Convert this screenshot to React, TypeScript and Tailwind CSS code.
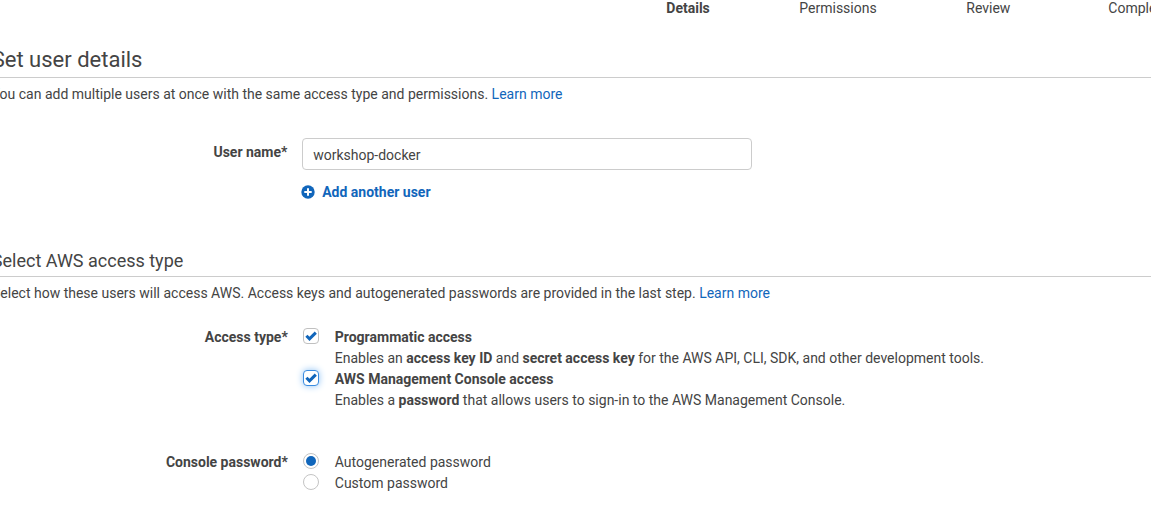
import React from "react";

function Link({ children }: { children: React.ReactNode }) {
  return <a href="#" className="text-[#1166bb]">{children}</a>;
}

function Check({ focused = false }: { focused?: boolean }) {
  return (
    <span className={focused ? "block size-4 rounded-[4px] border border-[#3b8ce0] bg-white shadow-[0_0_7px_#8fc3f5]" : "block size-4 rounded-[4px] border border-[#c0c0c0] bg-white"}>
      <svg viewBox="0 0 14 14" className="size-3.5"><path d="M2.4 6.8 5.5 9.9 11.8 3.6" fill="none" stroke="#1166bb" strokeWidth="3" /></svg>
    </span>
  );
}

function Radio({ on = false }: { on?: boolean }) {
  return (
    <span className="flex size-4 items-center justify-center rounded-full border border-[#c4c4c4] bg-white">
      {on && <span className="size-2.5 rounded-full bg-[#1166bb]" />}
    </span>
  );
}

const steps = ["Permissions", "Review", "Complete"];

export default function App() {
  return (
    <div className="h-[515px] w-[1151px] overflow-hidden bg-white font-['Roboto',sans-serif] text-[14px] leading-[21px] text-[#444]">
      <nav className="-mt-[2px] flex h-[21px] pl-[666.3px] whitespace-nowrap">
        <span className="w-[133px] shrink-0 font-bold">Details</span>
        <span className="w-[167px] shrink-0">{steps[0]}</span>
        <span className="w-[142px] shrink-0">{steps[1]}</span>
        <span className="shrink-0">{steps[2]}</span>
      </nav>
      <h1 className="-ml-[8.3px] mt-[23px] h-[36px] border-b border-[#ccc] text-[22px] leading-[36px]">Set user details</h1>
      <p className="-ml-[8.4px] mt-[6px]">You can add multiple users at once with the same access type and permissions. <Link>Learn more</Link></p>
      <div className="mt-[33px] flex">
        <label className="w-[287.4px] pt-[4px] text-right font-bold">User name*</label>
        <input className="ml-[14.6px] h-[32px] w-[450px] rounded-[4px] border border-[#ccc] px-[10.2px] pt-[2px]" defaultValue="workshop-docker" />
      </div>
      <div className="mt-[12px] flex items-center pl-[301px] font-bold">
        <svg viewBox="0 0 14 14" className="-mt-px mr-[7.2px] size-3.5"><circle cx="7" cy="7" r="6.7" fill="#1166bb" /><path d="M7 3.3v7.4M3.3 7h7.4" stroke="white" strokeWidth="2" /></svg>
        <Link>Add another user</Link>
      </div>
      <h2 className="-ml-[8.2px] mt-[44px] h-[30px] border-b border-[#ccc] text-[18px] leading-[27px]">Select AWS access type</h2>
      <p className="-ml-[8px] mt-[6px]">Select how these users will access AWS. Access keys and autogenerated passwords are provided in the last step. <Link>Learn more</Link></p>
      <div className="mt-[23px] flex">
        <span className="w-[287.8px] text-right font-bold">Access type*</span>
        <div className="ml-[15.2px]">
          <div className="flex gap-[15.8px]"><span className="pt-[1px]"><Check /></span><div><b>Programmatic access</b><p>Enables an <b>access key ID</b> and <b>secret access key</b> for the AWS API, CLI, SDK, and other development tools.</p></div></div>
          <div className="flex gap-[15.8px]"><span className="pt-[1px]"><Check focused /></span><div><b>AWS Management Console access</b><p>Enables a <b>password</b> that allows users to sign-in to the AWS Management Console.</p></div></div>
        </div>
      </div>
      <div className="mt-[41px] flex">
        <span className="w-[287.8px] text-right font-bold">Console password*</span>
        <div className="ml-[15.2px]">
          <div className="flex h-[21px] gap-[15.8px]"><span className="pt-px"><Radio on /></span><span>Autogenerated password</span></div>
          <div className="flex h-[21px] gap-[15.8px]"><span className="pt-px"><Radio /></span><span>Custom password</span></div>
        </div>
      </div>
    </div>
  );
}
